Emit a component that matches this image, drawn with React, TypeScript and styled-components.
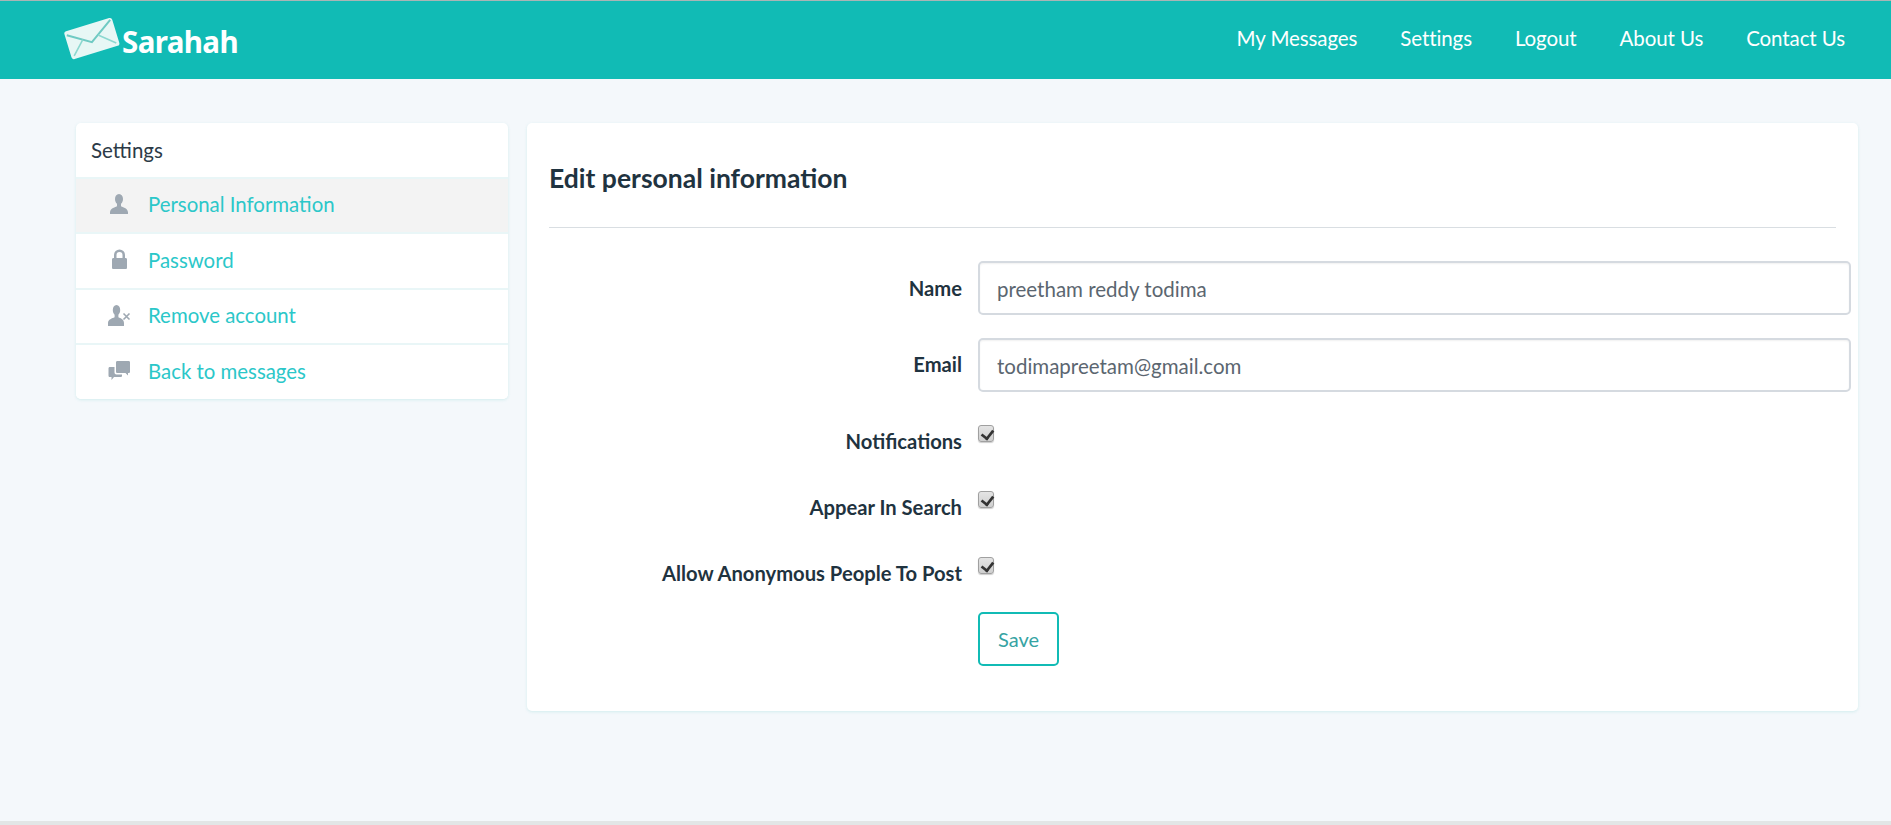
import * as React from 'react'
import styled, {createGlobalStyle} from 'styled-components'

const Global = createGlobalStyle`
  html, body {
    margin: 0;
    padding: 0;
    height: 100%;
    background: #f4f8fb;
    font-family: Lato, "Noto Sans", sans-serif;
  }
  * {
    box-sizing: border-box;
  }
`

const Page = styled.div`
  height: 825px;
  overflow: hidden;
  display: flex;
  flex-direction: column;
  border-bottom: 4px solid #e2e6e6;
`

const Header = styled.header`
  height: 79px;
  flex: none;
  background: #11bbb5;
  border-top: 1px solid #a9b5b5;
  display: flex;
  align-items: center;
  justify-content: space-between;
  padding: 0 46px 4px 62px;
`

const Brand = styled.a`
  display: flex;
  align-items: center;
  gap: 0;
  color: #fff;
  font-family: "Noto Sans", sans-serif;
  font-weight: 700;
  font-size: 29.5px;
  letter-spacing: -0.6px;
  text-decoration: none;
`

const BrandName = styled.span`
  margin-top: 6px;
`

const EnvelopeIcon = styled.svg`
  margin-top: 2px;
  filter: blur(0.4px);
`

const Nav = styled.nav`
  display: flex;
  gap: 43px;
`

const NavLink = styled.a`
  color: #fff;
  font-size: 20.5px;
  line-height: 28px;
  letter-spacing: -0.1px;
  text-decoration: none;
`

const Content = styled.main`
  flex: 1;
  display: flex;
  align-items: flex-start;
  gap: 19px;
  padding: 44px 33px 0 76px;
`

const Card = styled.section`
  background: #fff;
  border-radius: 5px;
  box-shadow: 0 1px 3px rgba(170, 225, 225, 0.45);
`

const Sidebar = styled(Card)`
  width: 432px;
  flex: none;
  overflow: hidden;
`

const SideTitle = styled.div`
  height: 53.5px;
  padding-left: 15px;
  display: flex;
  align-items: center;
  font-size: 20.5px;
  color: #2c3a47;
`

const SideItem = styled.a<{$active?: boolean}>`
  height: 55.5px;
  display: flex;
  align-items: center;
  padding: 0 0 2px 32px;
  gap: 17px;
  border-top: 2px solid #e9f6f7;
  background: ${p => (p.$active ? '#f3f3f3' : '#fff')};
  color: #2bc7c9;
  font-size: 20.4px;
  text-decoration: none;
`

const SideIcon = styled.svg`
  width: 23px;
  height: 23px;
  flex: none;
  fill: #9ea8b2;
`

const Panel = styled(Card)`
  flex: 1;
  height: 588px;
  padding: 0 22px;
`

const PanelTitle = styled.h2`
  margin: 0;
  height: 105px;
  display: flex;
  align-items: center;
  padding-top: 5px;
  font-size: 26.5px;
  font-weight: 700;
  color: #1f3340;
  border-bottom: 1px solid #d9dee2;
`

const Form = styled.form`
  margin: 33px -15px 0 0;
`

const Row = styled.div<{$height: number}>`
  display: grid;
  grid-template-columns: 413px 1fr;
  column-gap: 16px;
  height: ${p => p.$height}px;
  margin-bottom: 23px;
`

const Label = styled.label<{$top: number}>`
  text-align: right;
  font-size: 20.2px;
  font-weight: 700;
  color: #1f3340;
  line-height: 26px;
  padding-top: ${p => p.$top}px;
  white-space: nowrap;
`

const TextInput = styled.input`
  width: 100%;
  height: 54px;
  padding: 1px 17px 0;
  font: inherit;
  font-size: 20.5px;
  color: #5b6670;
  background: #fff;
  border: 2px solid #d5dae0;
  border-radius: 5px;
  box-shadow: inset 0 1px 2px rgba(0, 0, 0, 0.06);
  outline: none;
`

const Check = styled.input`
  appearance: none;
  display: block;
  width: 16px;
  height: 17px;
  margin: 10px 0 0;
  position: relative;
  background: linear-gradient(#e4e4e4, #cfcfcf);
  border: 1px solid #a0a0a0;
  border-radius: 3px;
  box-shadow: 0 1px 1px rgba(0, 0, 0, 0.2);

  &::after {
    content: "";
    position: absolute;
    left: 4px;
    top: 1px;
    width: 6px;
    height: 10px;
    border-right: 3px solid #333;
    border-bottom: 3px solid #333;
    transform: rotate(38deg) scale(0.9);
  }
`

const SaveButton = styled.button`
  width: 81px;
  height: 54px;
  font: inherit;
  font-size: 20px;
  color: #36a3a3;
  background: #fff;
  border: 2px solid #11bbb5;
  border-radius: 5px;
`

function Envelope() {
  return (
    <EnvelopeIcon width="60" height="46" viewBox="0 0 60 46">
      <g transform="rotate(-17 30 23)">
        <rect x="5" y="8" width="50" height="29" rx="2.5" fill="#e7f7f5" />
        <path d="M7 12 L29 26 L53 10" stroke="#6fcac3" strokeWidth="2" fill="none" />
        <path d="M8 34 L21 21 M52 34 L37 21" stroke="#8dd8d0" strokeWidth="1.6" fill="none" />
      </g>
    </EnvelopeIcon>
  )
}

const userPath = 'M11 1c2.5 0 4 2.2 4 5 0 2-.8 3.8-2 4.8v2.4c2.5 1.2 7 2.2 7 6.3v1.5H2v-1.5c0-4 4.500-5.100 7-6.300v-2.400C7.800 9.800 7 8 7 6c0-2.800 1.500-5 4-5z'

const menu = [
  {label: 'Personal Information', active: true, icon: <path d={userPath} />},
  {
    label: 'Password',
    icon: (
      <path fillRule="evenodd" d="M6 10V7a5.500 5.500 0 0 1 11 0v3h.500c1 0 1.500.6 1.500 1.500v8c0 1-.5 1.500-1.500 1.500h-12C4.500 21 4 20.500 4 19.500v-8C4 10.600 4.500 10 5.500 10zm2.500 0h6V7a3 3 0 0 0-6 0z" />
    ),
  },
  {
    label: 'Remove account',
    icon: (
      <>
        <path d="M8.500 1c2.300 0 3.700 2.200 3.700 5 0 2-.7 3.700-1.800 4.700v2.500c2.300 1.100 5.600 2 5.600 5.800V22H0v-3c0-3.800 4.300-4.700 6.600-5.800v-2.500C5.500 9.700 4.800 8 4.800 6c0-2.800 1.400-5 3.700-5z" />
        <path d="M15.500 9.500l6 6M21.500 9.500l-6 6" stroke="#9ea8b2" strokeWidth="1.600" fill="none" />
      </>
    ),
  },
  {
    label: 'Back to messages',
    icon: (
      <>
        <path d="M9.500 2h11c1 0 1.500.5 1.500 1.500v9c0 1-.5 1.500-1.500 1.500H20v2.500L17.500 14h-8C8.500 14 8 13.500 8 12.500v-9C8 2.500 8.500 2 9.500 2z" />
        <path d="M2 8h4.500v5.500c0 1.200.8 2 2 2h5.500v1c0 1-.5 1.500-1.500 1.500H6l-2.500 3V18H2c-1 0-1.500-.5-1.500-1.500v-7C.5 8.500 1 8 2 8z" />
      </>
    ),
  },
]

const navItems = ['My Messages', 'Settings', 'Logout', 'About Us', 'Contact Us']
const checks = ['Notifications', 'Appear In Search', 'Allow Anonymous People To Post']

export default function App() {
  return (
    <>
      <Global />
      <Page>
        <Header>
          <Brand href="#">
            <Envelope />
            <BrandName>Sarahah</BrandName>
          </Brand>
          <Nav>
            {navItems.map(item => (
              <NavLink href="#" key={item}>{item}</NavLink>
            ))}
          </Nav>
        </Header>
        <Content>
          <Sidebar>
            <SideTitle>Settings</SideTitle>
            {menu.map(item => (
              <SideItem href="#" key={item.label} $active={item.active}>
                <SideIcon viewBox="0 0 23 23">{item.icon}</SideIcon>
                {item.label}
              </SideItem>
            ))}
          </Sidebar>
          <Panel>
            <PanelTitle>Edit personal information</PanelTitle>
            <Form>
              <Row $height={54}>
                <Label $top={14}>Name</Label>
                <TextInput readOnly value="preetham reddy todima" />
              </Row>
              <Row $height={54}>
                <Label $top={13}>Email</Label>
                <TextInput readOnly value="todimapreetam@gmail.com" />
              </Row>
              {checks.map((label, i) => (
                <Row $height={i === 2 ? 42 : 43} key={label}>
                  <Label $top={13}>{label}</Label>
                  <div>
                    <Check type="checkbox" readOnly checked />
                  </div>
                </Row>
              ))}
              <Row $height={54}>
                <div />
                <div>
                  <SaveButton type="button">Save</SaveButton>
                </div>
              </Row>
            </Form>
          </Panel>
        </Content>
      </Page>
    </>
  )
}
